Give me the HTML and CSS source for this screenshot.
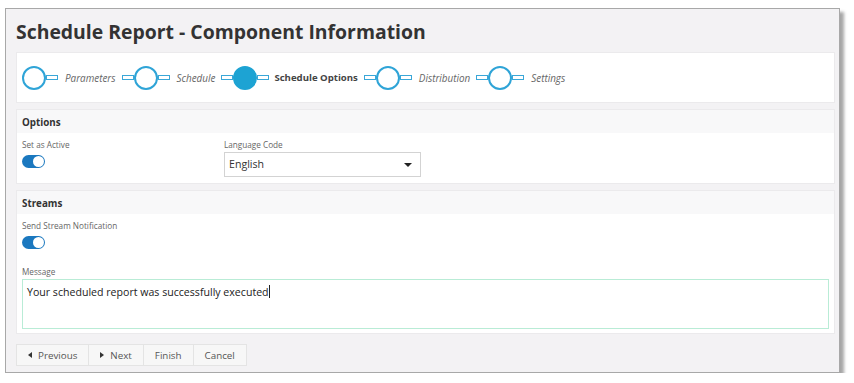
FILE: index.html
```html
<!DOCTYPE html>
<html lang="en">
<head>
    <meta charset="UTF-8">
    <meta name="viewport" content="width=device-width, initial-scale=1.0">
    <title>Schedule Report - Component Information</title>
    <link rel="stylesheet" href="styles.css">
</head>
<body>
    <div class="frame">
        <h1>Schedule Report - Component Information</h1>

        <div class="card wizard">
            <div class="step">
                <span class="circle"></span><span class="link"></span>
                <span class="step-label">Parameters</span>
            </div>
            <div class="step">
                <span class="link"></span><span class="circle"></span><span class="link"></span>
                <span class="step-label">Schedule</span>
            </div>
            <div class="step active">
                <span class="link"></span><span class="circle"></span><span class="link"></span>
                <span class="step-label">Schedule Options</span>
            </div>
            <div class="step">
                <span class="link"></span><span class="circle"></span><span class="link"></span>
                <span class="step-label">Distribution</span>
            </div>
            <div class="step">
                <span class="link"></span><span class="circle"></span><span class="link"></span>
                <span class="step-label">Settings</span>
            </div>
        </div>

        <div class="card section">
            <div class="section-head">Options</div>
            <div class="section-body options-grid">
                <div class="field">
                    <label>Set as Active</label>
                    <span class="toggle on"></span>
                </div>
                <div class="field">
                    <label>Language Code</label>
                    <div class="select">English <span class="caret"></span></div>
                </div>
            </div>
        </div>

        <div class="card section">
            <div class="section-head">Streams</div>
            <div class="section-body">
                <div class="field">
                    <label>Send Stream Notification</label>
                    <span class="toggle on"></span>
                </div>
                <div class="field message">
                    <label>Message</label>
                    <div class="textarea">Your scheduled report was successfully executed<span class="cursor"></span></div>
                </div>
            </div>
        </div>

        <div class="buttons">
            <button><span class="tri left"></span>Previous</button>
            <button><span class="tri right"></span>Next</button>
            <button>Finish</button>
            <button>Cancel</button>
        </div>
    </div>
</body>
</html>
```

FILE: styles.css
```css
body {
    margin: 0;
    background: #ffffff;
    font-family: 'Open Sans', 'Liberation Sans', sans-serif;
    color: #333;
}

.frame {
    margin: 8px 0 0 5px;
    width: 819px;
    height: 363px;
    border: 1px solid #a8a8a8;
    background: #f3f2f4;
    box-shadow: 4px 4px 3px rgba(0, 0, 0, 0.35);
    padding: 0 4px 0 10px;
}

h1 {
    font-size: 19.4px;
    font-weight: 700;
    line-height: 26px;
    margin: 0;
    padding: 10px 0 7px 0;
    color: #333;
}

.card {
    background: #fff;
    border: 1px solid #ebeaec;
    box-sizing: border-box;
}

/* wizard steps */
.wizard {
    height: 51px;
    display: flex;
    align-items: center;
    padding-left: 5px;
}

.step {
    display: flex;
    align-items: center;
}

.circle {
    width: 24px;
    height: 24px;
    border: 2px solid #2fa4d7;
    border-radius: 50%;
    box-sizing: border-box;
    background: #fff;
}

.step.active .circle {
    background: #1da3d3;
    border-color: #1da3d3;
}

.link {
    width: 12px;
    height: 5px;
    border: 1px solid #3aa7d8;
    box-sizing: border-box;
}

.step-label {
    font-size: 9.9px;
    font-style: italic;
    color: #666;
    margin: 0 6px 0 7px;
}

.step.active .step-label {
    font-style: normal;
    font-weight: 700;
    font-size: 9.6px;
    color: #444;
    margin-left: 5px;
}

/* sections */
.section {
    margin-top: 6px;
}

.section-head {
    background: #f8f8f9;
    font-size: 9.8px;
    font-weight: 700;
    color: #333;
    height: 23px;
    line-height: 25px;
    padding-left: 5px;
}

.section-body {
    padding: 5px 5px 4px 5px;
}

.options-grid {
    display: grid;
    grid-template-columns: 202px 197px;
    padding-bottom: 6px;
}

.field label {
    display: block;
    font-size: 8.2px;
    color: #666;
    line-height: 14px;
}

.toggle {
    display: block;
    position: relative;
    width: 23px;
    height: 13px;
    border-radius: 7px;
    background: #1b78bf;
    margin-top: 3px;
}

.toggle::after {
    content: "";
    position: absolute;
    right: 1px;
    top: 1px;
    width: 11px;
    height: 11px;
    border-radius: 50%;
    background: #fff;
}

.select {
    position: relative;
    height: 25px;
    border: 1px solid #d3d3d3;
    box-sizing: border-box;
    font-size: 10.6px;
    line-height: 23px;
    padding-left: 4px;
    color: #333;
}

.caret {
    position: absolute;
    right: 8px;
    top: 10px;
    border-left: 4px solid transparent;
    border-right: 4px solid transparent;
    border-top: 4px solid #222;
}

.section-body .field + .message {
    margin-top: 16px;
}

.textarea {
    height: 50px;
    border: 1px solid #b9ecd6;
    box-sizing: border-box;
    font-size: 10.6px;
    line-height: 24px;
    padding-left: 4px;
    color: #222;
}

.cursor {
    display: inline-block;
    width: 1px;
    height: 13px;
    background: #222;
    vertical-align: -2px;
}

/* buttons */
.buttons {
    display: flex;
    margin-top: 10px;
}

.buttons button {
    font-family: inherit;
    font-size: 9.8px;
    color: #555;
    background: #f7f7f7;
    border: 1px solid #e4e4e4;
    height: 22px;
    padding: 0 11px;
    margin: 0;
    display: flex;
    align-items: center;
}

.buttons button + button {
    border-left: none;
}

.tri {
    width: 0;
    height: 0;
    border-top: 3px solid transparent;
    border-bottom: 3px solid transparent;
    margin-right: 6px;
}

.tri.left {
    border-right: 4px solid #333;
}

.tri.right {
    border-left: 4px solid #333;
}
```
